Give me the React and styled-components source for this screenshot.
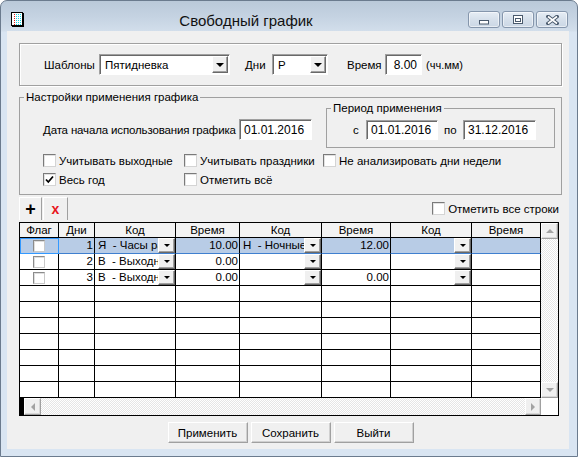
import styled, { createGlobalStyle } from "styled-components";

const GlobalStyle = createGlobalStyle`
  html, body {
    margin: 0;
    padding: 0;
    background: #fff;
  }
  body {
    font-family: "Liberation Sans", Arial, sans-serif;
    font-size: 11.5px;
    color: #000;
  }
  * {
    box-sizing: border-box;
  }
`;

const columns = [
  { title: "Флаг", w: 39 },
  { title: "Дни", w: 36 },
  { title: "Код", w: 81 },
  { title: "Время", w: 64 },
  { title: "Код", w: 82 },
  { title: "Время", w: 69 },
  { title: "Код", w: 81 },
  { title: "Время", w: 69 },
];

const rows = [
  { day: 1, codes: ["Я  - Часы работы", "Н  - Ночные", ""], times: ["10.00", "12.00", ""] },
  { day: 2, codes: ["В  - Выходной", "", ""], times: ["0.00", "", ""] },
  { day: 3, codes: ["В  - Выходной", "", ""], times: ["0.00", "0.00", ""] },
];

const EMPTY_ROWS = 7;
const gridTemplate = columns.map((c) => `${c.w}px`).join(" ");

const Window = styled.div`
  width: 578px;
  height: 457px;
  border: 1px solid #6b7b8e;
  border-radius: 7px 7px 0 0;
  background: linear-gradient(180deg, #bac9d9 0px, #c5d3e2 16px, #d2deeb 30px, #d9e5f2 31px);
  padding: 0 8px 7px 6px;
  display: flex;
  flex-direction: column;
`;

const TitleBar = styled.div`
  height: 30px;
  display: flex;
  align-items: flex-start;
  padding-right: 1px;
`;

const IconBox = styled.div`
  margin: 10px 0 0 3px;
  width: 14px;
  height: 16px;
`;

const Title = styled.div`
  flex: 1;
  text-align: center;
  font-size: 15px;
  line-height: 18px;
  margin-top: 11px;
  color: #111;
`;

const CaptionButtons = styled.div`
  display: flex;
  gap: 2px;
  margin-top: 10px;
`;

const CaptionButton = styled.div`
  width: 32px;
  height: 17px;
  border: 1px solid #8596ac;
  border-radius: 3px;
  background: linear-gradient(180deg, #e6edf5 0%, #d6e0eb 50%, #cbd7e5 100%);
  box-shadow: inset 0 0 0 1px rgba(255, 255, 255, 0.55);
  display: flex;
  align-items: center;
  justify-content: center;
`;

const Client = styled.div`
  flex: 1;
  background: #f0f0f0;
  display: flex;
  flex-direction: column;
  padding: 12px 7px 0 12px;
`;

const TemplateBar = styled.div`
  height: 43px;
  width: 543px;
  border: 1px solid #a0a0a0;
  box-shadow: inset 1px 1px 0 #fff, 1px 1px 0 #fff;
  display: flex;
  align-items: center;
  padding-left: 24px;
`;

const FieldLabel = styled.span`
  width: ${(p) => (p.$w ? `${p.$w}px` : "auto")};
  margin-left: ${(p) => p.$ml || 0}px;
  font-size: ${(p) => p.$size || 11.5}px;
  letter-spacing: ${(p) => (p.$tight ? "-0.15px" : "normal")};
  white-space: nowrap;
  flex-shrink: 0;
`;

const ComboBox = styled.div`
  width: ${(p) => p.$w}px;
  height: 21px;
  background: #fff;
  border: 1px solid;
  border-color: #a0a0a0 #fff #fff #a0a0a0;
  box-shadow: inset 1px 1px 0 #696969;
  display: flex;
  align-items: center;
  padding: 0 1px 0 5px;
  flex-shrink: 0;
`;

const ComboText = styled.span`
  flex: 1;
  white-space: nowrap;
  overflow: hidden;
`;

const DropButton = styled.span`
  width: ${(p) => p.$w || 16}px;
  height: ${(p) => p.$h || 17}px;
  background: #f0f0f0;
  border: 1px solid;
  border-color: #fff #696969 #696969 #fff;
  box-shadow: inset -1px -1px 0 #a0a0a0;
  display: flex;
  align-items: center;
  justify-content: center;
  flex-shrink: 0;
`;

const DropArrow = styled.span`
  width: 0;
  height: 0;
  border-left: ${(p) => p.$s}px solid transparent;
  border-right: ${(p) => p.$s}px solid transparent;
  border-top: ${(p) => p.$s}px solid #000;
`;

const TextBox = styled.div`
  width: ${(p) => p.$w}px;
  height: ${(p) => p.$h || 21}px;
  background: #fff;
  border: 1px solid;
  border-color: #a0a0a0 #fff #fff #a0a0a0;
  box-shadow: inset 1px 1px 0 #696969;
  display: flex;
  align-items: center;
  justify-content: ${(p) => (p.$right ? "flex-end" : "flex-start")};
  padding: 0 4px;
  font-size: 12px;
  flex-shrink: 0;
`;

const SettingsGroup = styled.fieldset`
  margin: 4px 0 0 0;
  width: 543px;
  height: 105px;
  border: 1px solid #a0a0a0;
  padding: 0 0 0 4px;
  min-width: 0;
`;

const GroupLegend = styled.legend`
  padding: 0 2px;
  line-height: 14px;
  font-size: 11.5px;
`;

const TopRow = styled.div`
  margin-top: -3px;
  padding: 0 6px 0 19px;
  display: flex;
  align-items: flex-start;
`;

const DateField = styled.div`
  margin-top: 18px;
  display: flex;
  align-items: center;
`;

const PeriodGroup = styled.fieldset`
  margin: 0 0 0 auto;
  width: 229px;
  height: 47px;
  border: 1px solid #a0a0a0;
  padding: 0 0 0 4px;
  min-width: 0;
`;

const PeriodRow = styled.div`
  padding: 5px 0 0 22px;
  display: flex;
  align-items: center;
`;

const CheckGrid = styled.div`
  margin-top: 3px;
  padding-left: 19px;
  display: grid;
  grid-template-columns: 141px 139px auto;
  grid-auto-rows: 19px;
`;

const CheckItem = styled.label`
  display: flex;
  align-items: center;
  gap: 3px;
  white-space: nowrap;
`;

const CheckBox = styled.span`
  width: 13px;
  height: 13px;
  background: #fff;
  border: 1px solid;
  border-color: #7a7a7a #d4d4d4 #d4d4d4 #7a7a7a;
  box-shadow: inset 1px 1px 0 #e2e2e2;
  display: flex;
  align-items: center;
  justify-content: center;
  flex-shrink: 0;
`;

const Toolbar = styled.div`
  margin-top: 2px;
  width: 540px;
  height: 23px;
  display: flex;
  align-items: center;
`;

const ToolButton = styled.div`
  width: ${(p) => p.$w}px;
  height: 23px;
  margin-right: 1px;
  border-top: 1px solid #fff;
  border-left: 1px solid #fff;
  border-right: 1px solid #a0a0a0;
  display: flex;
  align-items: center;
  justify-content: center;
  font-weight: bold;
  font-size: ${(p) => p.$size}px;
  color: ${(p) => p.$color};
`;

const MarkAll = styled(CheckItem)`
  margin-left: auto;
  gap: 3px;
`;

const Grid = styled.div`
  margin-top: 2px;
  width: 540px;
  height: 194px;
  border: 1px solid #000;
  background: #fff;
  display: flex;
  flex-direction: column;
`;

const GridMain = styled.div`
  height: 175px;
  display: flex;
`;

const Table = styled.div`
  width: 521px;
  overflow: hidden;
`;

const RowLine = styled.div`
  display: grid;
  grid-template-columns: ${gridTemplate};
  height: ${(p) => (p.$header ? 15 : 16)}px;
`;

const Cell = styled.div`
  border-right: 1px solid #000;
  border-bottom: 1px solid ${(p) => (p.$selected ? "#3f7fcf" : "#000")};
  background: ${(p) => (p.$header ? "#f3f3f3" : p.$selected ? "#b8cce6" : "#fff")};
  line-height: ${(p) => (p.$header ? 14 : 15)}px;
  font-size: 11.5px;
  text-align: ${(p) => p.$align || "left"};
  padding: 0 ${(p) => (p.$align === "right" ? 1 : 0)}px 0 0;
  white-space: pre;
  overflow: hidden;
  display: ${(p) => (p.$flex ? "flex" : "block")};
  align-items: center;
  justify-content: ${(p) => (p.$flex === "center" ? "center" : "flex-start")};
  outline: ${(p) => (p.$focus ? "1px solid #3399ff" : "none")};
  outline-offset: -1px;
`;

const CellText = styled.span`
  flex: 1;
  overflow: hidden;
  white-space: pre;
  padding-left: 3px;
`;

const GridCheck = styled.span`
  width: 12px;
  height: 12px;
  background: #fff;
  border: 1px solid;
  border-color: #8c8c8c #c9c9c9 #c9c9c9 #8c8c8c;
  box-shadow: inset 1px 1px 0 #dedede;
`;

const VScroll = styled.div`
  width: 17px;
  display: flex;
  flex-direction: column;
`;

const ScrollButton = styled.div`
  width: ${(p) => p.$w || 17}px;
  height: ${(p) => p.$h || 17}px;
  background: #f0f0f0;
  border: 1px solid;
  border-color: #fff #a0a0a0 #a0a0a0 #fff;
  box-shadow: inset -1px -1px 0 #d8d8d8;
  display: flex;
  align-items: center;
  justify-content: center;
  flex-shrink: 0;
`;

const ScrollTrack = styled.div`
  flex: 1;
  background: repeating-conic-gradient(#fff 0 25%, #e6e6e6 0 50%) 0 0 / 2px 2px;
`;

const ScrollArrow = styled.span`
  width: 0;
  height: 0;
  ${(p) =>
    p.$dir === "up"
      ? "border-left: 4px solid transparent; border-right: 4px solid transparent; border-bottom: 4px solid #a3a3a3;"
      : p.$dir === "down"
      ? "border-left: 4px solid transparent; border-right: 4px solid transparent; border-top: 4px solid #a3a3a3;"
      : p.$dir === "left"
      ? "border-top: 4px solid transparent; border-bottom: 4px solid transparent; border-right: 4px solid #a3a3a3;"
      : "border-top: 4px solid transparent; border-bottom: 4px solid transparent; border-left: 4px solid #a3a3a3;"}
`;

const GridBottom = styled.div`
  height: 17px;
  display: flex;
`;

const HScroll = styled.div`
  width: 521px;
  display: flex;
`;

const FrozenMark = styled.div`
  width: 4px;
  background: #000;
`;

const Corner = styled.div`
  flex: 1;
  background: #fff;
`;

const Footer = styled.div`
  margin-top: 6px;
  width: 543px;
  display: flex;
  justify-content: center;
  gap: 3px;
`;

const PushButton = styled.div`
  width: 80px;
  height: 21px;
  background: #f0f0f0;
  border: 1px solid;
  border-color: #fff #a0a0a0 #a0a0a0 #fff;
  box-shadow: inset -1px -1px 0 #d0d0d0;
  display: flex;
  align-items: center;
  justify-content: center;
`;

function AppIcon() {
  const dots = [];
  for (let y = 3; y <= 13; y += 2) {
    for (let x = 6; x <= 11; x += 2) {
      dots.push(<rect key={`c${x}-${y}`} x={x} y={y} width="1" height="1" fill="#12d6e6" />);
    }
    dots.push(<rect key={`r${y}`} x="4" y={y} width="1" height="1" fill="#e01010" />);
    dots.push(<rect key={`b${y}`} x="1" y={y} width="1" height="1" fill="#000" />);
  }
  return (
    <svg width="14" height="16" viewBox="0 0 14 16">
      <rect x="1.5" y="1.5" width="11" height="13" fill="#fff" stroke="#000" />
      <rect x="12" y="2" width="2" height="14" fill="#000" />
      <rect x="2" y="14" width="12" height="2" fill="#000" />
      {dots}
    </svg>
  );
}

function Minimize() {
  return (
    <svg width="10" height="5" viewBox="0 0 10 5" style={{ marginTop: 5 }}>
      <rect x="0.5" y="0.5" width="9" height="3.5" fill="#fff" stroke="#4a5a6d" />
    </svg>
  );
}

function Maximize() {
  return (
    <svg width="10" height="9" viewBox="0 0 10 9">
      <rect x="0.5" y="0.5" width="9" height="8" fill="#fff" stroke="#4a5a6d" />
      <rect x="2.5" y="3.5" width="5" height="3" fill="none" stroke="#4a5a6d" />
    </svg>
  );
}

function CloseGlyph() {
  return (
    <svg width="13" height="10" viewBox="0 0 13 10">
      <path d="M2 1.5 L11 8.5 M11 1.5 L2 8.5" stroke="#4a5a6d" strokeWidth="3.6" strokeLinecap="square" />
      <path d="M2 1.5 L11 8.5 M11 1.5 L2 8.5" stroke="#fff" strokeWidth="1.6" />
    </svg>
  );
}

function CheckMark() {
  return (
    <svg width="9" height="9" viewBox="0 0 9 9">
      <path d="M1 4.5 L3.3 7 L8 1.5" fill="none" stroke="#000" strokeWidth="1.8" />
    </svg>
  );
}

function Check({ checked, children }) {
  return (
    <CheckItem>
      <CheckBox>{checked && <CheckMark />}</CheckBox>
      {children}
    </CheckItem>
  );
}

function Combo({ w, value }) {
  return (
    <ComboBox $w={w}>
      <ComboText>{value}</ComboText>
      <DropButton>
        <DropArrow $s={4} />
      </DropButton>
    </ComboBox>
  );
}

function CodeCell({ text, selected }) {
  return (
    <Cell $flex="start" $selected={selected}>
      <CellText>{text}</CellText>
      <DropButton $w={17} $h={15}>
        <DropArrow $s={3} />
      </DropButton>
    </Cell>
  );
}

function DataRow({ row, selected }) {
  return (
    <RowLine>
      <Cell $flex="center" $selected={selected} $focus={selected}>
        <GridCheck />
      </Cell>
      <Cell $align="right" $selected={selected}>{row.day}</Cell>
      {row.codes.map((code, i) => [
        <CodeCell key={`c${i}`} text={code} selected={selected} />,
        <Cell key={`t${i}`} $align="right" $selected={selected}>
          {row.times[i]}
        </Cell>,
      ])}
    </RowLine>
  );
}

export default function App() {
  return (
    <>
      <GlobalStyle />
      <Window>
        <TitleBar>
          <IconBox>
            <AppIcon />
          </IconBox>
          <Title>Свободный график</Title>
          <CaptionButtons>
            <CaptionButton>
              <Minimize />
            </CaptionButton>
            <CaptionButton>
              <Maximize />
            </CaptionButton>
            <CaptionButton>
              <CloseGlyph />
            </CaptionButton>
          </CaptionButtons>
        </TitleBar>

        <Client>
          <TemplateBar>
            <FieldLabel $w={55}>Шаблоны</FieldLabel>
            <Combo w={131} value="Пятидневка" />
            <FieldLabel $w={27} $ml={15}>Дни</FieldLabel>
            <Combo w={56} value="Р" />
            <FieldLabel $w={38} $ml={19}>Время</FieldLabel>
            <TextBox $w={37} $right>8.00</TextBox>
            <FieldLabel $ml={4} $size={11}>(чч.мм)</FieldLabel>
          </TemplateBar>

          <SettingsGroup>
            <GroupLegend>Настройки применения графика</GroupLegend>
            <TopRow>
              <DateField>
                <FieldLabel $w={196} $tight>Дата начала использования графика</FieldLabel>
                <TextBox $w={73}>01.01.2016</TextBox>
              </DateField>
              <PeriodGroup>
                <GroupLegend>Период применения</GroupLegend>
                <PeriodRow>
                  <FieldLabel $w={13}>с</FieldLabel>
                  <TextBox $w={72} $h={20}>01.01.2016</TextBox>
                  <FieldLabel $w={19} $ml={6}>по</FieldLabel>
                  <TextBox $w={73} $h={20}>31.12.2016</TextBox>
                </PeriodRow>
              </PeriodGroup>
            </TopRow>
            <CheckGrid>
              <Check>Учитывать выходные</Check>
              <Check>Учитывать праздники</Check>
              <Check>Не анализировать дни недели</Check>
              <Check checked>Весь год</Check>
              <Check>Отметить всё</Check>
            </CheckGrid>
          </SettingsGroup>

          <Toolbar>
            <ToolButton $w={23} $size={18} $color="#000">+</ToolButton>
            <ToolButton $w={25} $size={14} $color="#e8151b">x</ToolButton>
            <MarkAll>
              <CheckBox />
              Отметить все строки
            </MarkAll>
          </Toolbar>

          <Grid>
            <GridMain>
              <Table>
                <RowLine $header>
                  {columns.map((c, i) => (
                    <Cell key={i} $header $align="center">
                      {c.title}
                    </Cell>
                  ))}
                </RowLine>
                {rows.map((r, i) => (
                  <DataRow key={r.day} row={r} selected={i === 0} />
                ))}
                {Array.from({ length: EMPTY_ROWS }, (_, i) => (
                  <RowLine key={`e${i}`}>
                    {columns.map((c, j) => (
                      <Cell key={j} />
                    ))}
                  </RowLine>
                ))}
              </Table>
              <VScroll>
                <ScrollButton $h={16}>
                  <ScrollArrow $dir="up" />
                </ScrollButton>
                <ScrollTrack />
                <ScrollButton $h={16}>
                  <ScrollArrow $dir="down" />
                </ScrollButton>
              </VScroll>
            </GridMain>
            <GridBottom>
              <HScroll>
                <FrozenMark />
                <ScrollButton>
                  <ScrollArrow $dir="left" />
                </ScrollButton>
                <ScrollTrack />
                <ScrollButton $w={16}>
                  <ScrollArrow $dir="right" />
                </ScrollButton>
              </HScroll>
              <Corner />
            </GridBottom>
          </Grid>

          <Footer>
            <PushButton>Применить</PushButton>
            <PushButton>Сохранить</PushButton>
            <PushButton>Выйти</PushButton>
          </Footer>
        </Client>
      </Window>
    </>
  );
}
